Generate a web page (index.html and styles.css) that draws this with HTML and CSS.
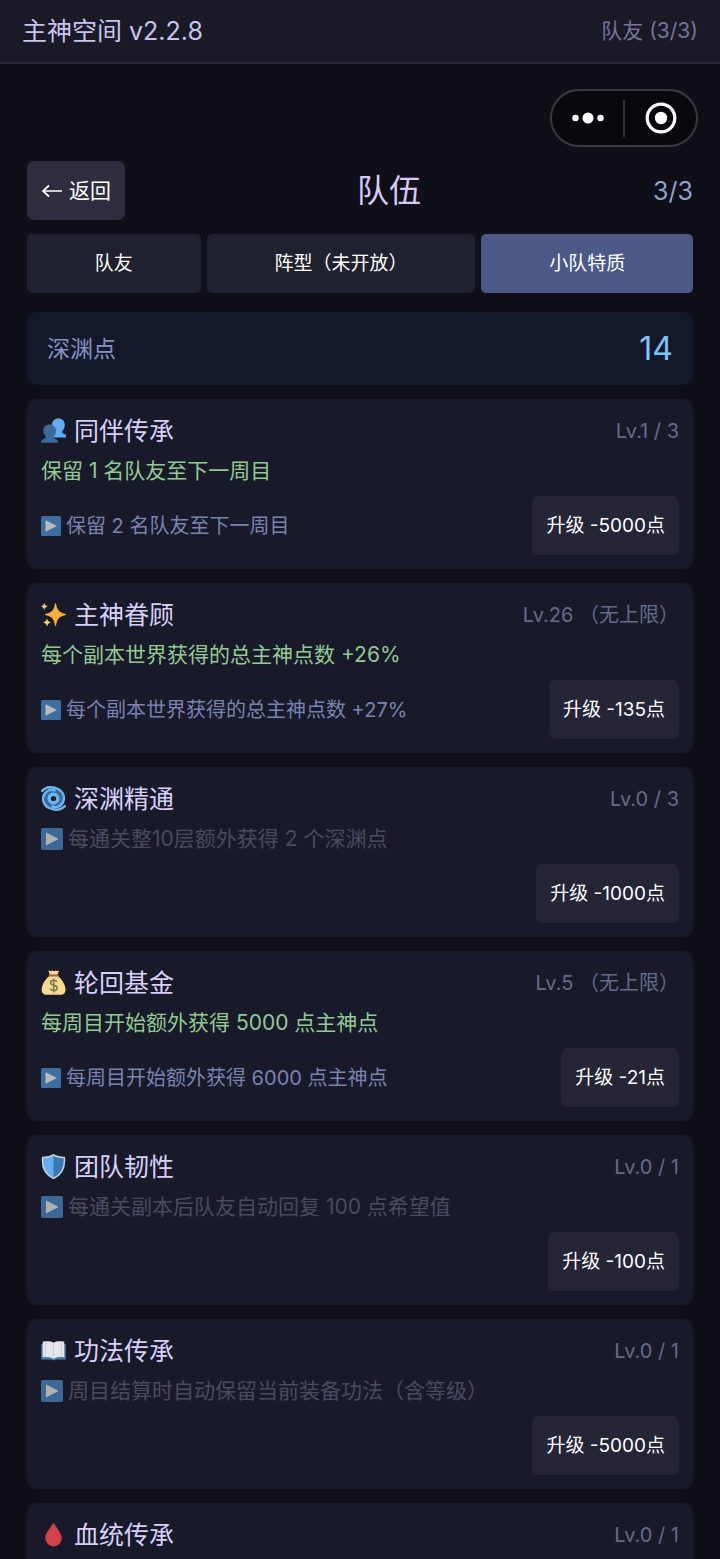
FILE: index.html
```html
<!DOCTYPE html>
<html lang="zh-CN">
<head>
    <meta charset="UTF-8">
    <meta name="viewport" content="width=device-width, initial-scale=1.0">
    <title>主神空间</title>
    <link rel="stylesheet" href="styles.css">
</head>
<body>
    <!-- Icônes partagées -->
    <svg class="sprite" aria-hidden="true">
        <symbol id="play" viewBox="0 0 20 20">
            <rect width="20" height="20" rx="1.5" fill="#4b8ac4"/>
            <path d="M4.5 4.2 16 10 4.5 15.8z" fill="#f3f1ee"/>
        </symbol>
    </svg>

    <header class="navbar">
        <span class="app-name">主神空间 v2.2.8</span>
        <span class="page-name">队友 (3/3)</span>
    </header>

    <div class="capsule-row">
        <div class="capsule">
            <button type="button" aria-label="更多">
                <svg width="32" height="12" viewBox="0 0 32 12" fill="#fff"><circle cx="3.5" cy="6" r="3.2"/><circle cx="16" cy="6" r="5.5"/><circle cx="28.5" cy="6" r="3.2"/></svg>
            </button>
            <span class="capsule-line"></span>
            <button type="button" aria-label="关闭">
                <svg width="32" height="32" viewBox="0 0 32 32"><circle cx="16" cy="16" r="13.8" fill="none" stroke="#fff" stroke-width="3.2"/><circle cx="16" cy="16" r="6.2" fill="#fff"/></svg>
            </button>
        </div>
    </div>

    <main class="container">
        <div class="title-row">
            <button type="button" class="btn btn-back"><svg width="22" height="14" viewBox="0 0 22 14" fill="none" stroke="#fff" stroke-width="1.7"><path d="M21 7H2M8 1.5 2 7l6 5.5"/></svg>返回</button>
            <h1>队伍</h1>
            <span class="count">3/3</span>
        </div>

        <nav class="tabs">
            <button type="button" class="tab">队友</button>
            <button type="button" class="tab">阵型（未开放）</button>
            <button type="button" class="tab active">小队特质</button>
        </nav>

        <div class="points">
            <span>深渊点</span>
            <strong>14</strong>
        </div>

        <!-- Liste des traits -->
        <section class="card">
            <div class="card-head">
                <svg class="emoji" viewBox="0 0 25 25">
                    <path d="M17.5.5c3.800 0 6.300 2.500 6.300 6.200 0 2.600-.8 4.800-2.500 6.300v2l3.200 1.600c.4.300.5 1.300.5 3H10v-4l3.500-2c-1.700-1.600-2.500-3.900-2.500-6.700C11 3 13.500.5 17.500.5z" fill="#64adf0"/>
                    <path d="M8.700 6.500c3.800 0 6.300 2.500 6.300 6.200 0 2.600-.8 4.300-2.300 5.600v2l3.500 1.700c.5.400.6 1.400.6 2.700H0c0-1.600.2-2.400.8-2.800L4.500 20v-1.900c-1.500-1.500-2.200-3.300-2.200-5.800 0-3.400 2.600-5.800 6.400-5.800z" fill="#3b6a9c"/>
                </svg>
                <h2>同伴传承</h2>
                <span class="level">Lv.1 / 3</span>
            </div>
            <p class="current">保留 1 名队友至下一周目</p>
            <div class="card-foot">
                <p class="next"><svg><use href="#play"/></svg>保留 2 名队友至下一周目</p>
                <button type="button" class="btn">升级 -5000点</button>
            </div>
        </section>

        <section class="card">
            <div class="card-head">
                <svg class="emoji" viewBox="0 0 25 25">
                    <path d="M14.500 1.500c1.200 6.500 3 9.200 10.300 11-7.300 1.800-9.100 4.600-10.300 11.200-1.200-6.600-3-9.400-10.200-11.200 7.200-1.800 9-4.500 10.200-11z" fill="#f7b03c" stroke="#f7b03c"/>
                    <path d="M3.300.8c.5 2.200 1.300 3 3.400 3.600-2.100.6-2.900 1.400-3.400 3.600C2.800 5.800 2 5 0 4.400 2 3.800 2.800 3 3.300.8zM6 16.300c.6 2.600 1.500 3.500 4 4.200-2.500.6-3.400 1.600-4 4.200-.6-2.600-1.500-3.600-4-4.200 2.500-.7 3.400-1.600 4-4.200z" fill="#fad365"/>
                </svg>
                <h2>主神眷顾</h2>
                <span class="level">Lv.26 （无上限）</span>
            </div>
            <p class="current">每个副本世界获得的总主神点数 +26%</p>
            <div class="card-foot">
                <p class="next"><svg><use href="#play"/></svg>每个副本世界获得的总主神点数 +27%</p>
                <button type="button" class="btn">升级 -135点</button>
            </div>
        </section>

        <section class="card">
            <div class="card-head">
                <svg class="emoji" viewBox="0 0 25 25" fill="none" stroke-linecap="round">
                    <circle cx="12.500" cy="12.500" r="9" fill="#396b9c"/>
                    <circle cx="12.500" cy="12.500" r="4.300" fill="#141c30" stroke="#6db5f0" stroke-width="3.400"/>
                    <path d="M1.200 4.800C5.500.500 12 .400 17.500 3.300c5 2.800 6.800 8.700 4 13.700-2.300 4-6.800 5.200-10 3.500" stroke="#6db5f0" stroke-width="2.600"/>
                    <path d="M23.800 20.200C19.500 24.500 13 24.600 7.500 21.700c-5-2.800-6.800-8.700-4-13.700 2.300-4 6.800-5.200 10-3.500" stroke="#6db5f0" stroke-width="2.600"/>
                </svg>
                <h2>深渊精通</h2>
                <span class="level">Lv.0 / 3</span>
            </div>
            <p class="locked"><svg><use href="#play"/></svg>每通关整10层额外获得 2 个深渊点</p>
            <div class="card-foot">
                <button type="button" class="btn">升级 -1000点</button>
            </div>
        </section>

        <section class="card">
            <div class="card-head">
                <svg class="emoji" viewBox="0 0 25 25">
                    <path d="M7.500.3c1.500.9 2.700.9 3.800.1 1.200.8 2.200.8 3.400 0 1 .8 2 .8 3.300.1l-1.700 5.200c4.200 2.500 8.200 9 8.200 13.500 0 4-1.700 5.500-5 5.500H6c-3.500 0-5.300-1.500-5.300-5.200C.7 14.900 4.700 8.200 9 5.700z" fill="#f8d990"/>
                    <path d="M8.500 5.500h8.300" stroke="#a85c46" stroke-width="2" stroke-linecap="round"/>
                    <path d="M16 11.800c-.8-1.200-1.900-1.600-3.300-1.600-1.900 0-3.100 1-3.100 2.500 0 3.500 6.600 1.700 6.600 5.200 0 1.700-1.400 2.700-3.400 2.700-1.600 0-2.900-.6-3.600-1.900M12.700 8.500v14" fill="none" stroke="#777a50" stroke-width="1.500"/>
                </svg>
                <h2>轮回基金</h2>
                <span class="level">Lv.5 （无上限）</span>
            </div>
            <p class="current">每周目开始额外获得 5000 点主神点</p>
            <div class="card-foot">
                <p class="next"><svg><use href="#play"/></svg>每周目开始额外获得 6000 点主神点</p>
                <button type="button" class="btn">升级 -21点</button>
            </div>
        </section>

        <section class="card">
            <div class="card-head">
                <svg class="emoji" viewBox="0 0 25 25">
                    <path d="M12.500.8c2.900 2 6.500 2.700 10.800 2.600 1 9.700-1.400 16.800-10.800 21-9.400-4.200-11.800-11.300-10.800-21C6 3.500 9.600 2.800 12.500.8z" fill="#3b79b5"/>
                    <path d="M12.500.8v23.600C3.100 20.200.7 13.100 1.700 3.400 6 3.500 9.600 2.800 12.500.8z" fill="#65aff0"/>
                    <path d="M12.500.8c2.900 2 6.500 2.700 10.800 2.600 1 9.700-1.400 16.800-10.800 21-9.400-4.200-11.800-11.300-10.800-21C6 3.500 9.600 2.800 12.500.8z" fill="none" stroke="#c9d3dc" stroke-width="1.500"/>
                </svg>
                <h2>团队韧性</h2>
                <span class="level">Lv.0 / 1</span>
            </div>
            <p class="locked"><svg><use href="#play"/></svg>每通关副本后队友自动回复 100 点希望值</p>
            <div class="card-foot">
                <button type="button" class="btn">升级 -100点</button>
            </div>
        </section>

        <section class="card">
            <div class="card-head">
                <svg class="emoji" viewBox="0 0 25 25">
                    <path d="M.3 6h24.400v15.500H15c-.8 1-4.200 1-5 0H.3z" fill="#4b7ba7"/>
                    <path d="M1.700 3.800c4-.8 8.300-.5 10.800 1 2.500-1.500 6.800-1.800 10.800-1v15.500c-4-.4-8.300-.2-10.800 1.500-2.500-1.700-6.800-1.900-10.800-1.500z" fill="#e5e7eb"/>
                    <path d="M12.500 4.800v16M4.500 4v15M20.500 4v15" stroke="#c3c7ce" stroke-width=".8"/>
                </svg>
                <h2>功法传承</h2>
                <span class="level">Lv.0 / 1</span>
            </div>
            <p class="locked"><svg><use href="#play"/></svg>周目结算时自动保留当前装备功法（含等级）</p>
            <div class="card-foot">
                <button type="button" class="btn">升级 -5000点</button>
            </div>
        </section>

        <section class="card">
            <div class="card-head">
                <svg class="emoji" viewBox="0 0 25 25">
                    <path d="M12.500.8c3.500 5.400 8.200 10.600 8.200 15.500a8.200 8.200 0 0 1-16.400 0C4.300 11.400 9 6.200 12.500.8z" fill="#d3414c"/>
                </svg>
                <h2>血统传承</h2>
                <span class="level">Lv.0 / 1</span>
            </div>
        </section>
    </main>
</body>
</html>
```
FILE: styles.css
```css
* {
    box-sizing: border-box;
}
body {
    margin: 0;
    height: 100vh;
    display: flex;
    flex-direction: column;
    overflow: hidden;
    background-color: #0f1017;
    color: #fff;
    font-family: Inter, "Noto Sans CJK SC", sans-serif;
    font-size: 20px;
    line-height: 30px;
}
h1, h2, p {
    margin: 0;
    font-weight: 400;
}
button {
    border: none;
    background: none;
    color: inherit;
    font: inherit;
    padding: 0;
}
svg {
    flex: none;
}
.sprite {
    display: none;
}
.navbar {
    flex: none;
    height: 64px;
    padding: 0 22px;
    display: flex;
    align-items: center;
    justify-content: space-between;
    background-color: #1a1a26;
    border-bottom: 2px solid #29283a;
}
.app-name {
    font-size: 25px;
    color: #c9c3f0;
}
.page-name {
    font-size: 21px;
    color: #77739c;
}

/* Capsule */
.capsule-row {
    flex: none;
    display: flex;
    justify-content: flex-end;
    padding: 25px 22px 14px;
}
.capsule {
    display: flex;
    align-items: center;
    width: 148px;
    height: 58px;
    border: 2px solid #39393d;
    border-radius: 30px;
    background-color: #09090d;
}
.capsule button {
    flex: 1;
    display: flex;
    justify-content: center;
}
.capsule-line {
    width: 2px;
    height: 37px;
    background-color: #323237;
}

.container {
    flex: 1;
    min-height: 0;
    overflow: hidden;
    padding: 0 27px;
}
.title-row {
    display: flex;
    align-items: center;
    justify-content: space-between;
    margin-bottom: 14px;
}
.title-row h1 {
    font-size: 32px;
    line-height: 40px;
    color: #d9c8fa;
}
.count {
    font-size: 25px;
    color: #93a0cc;
}
.btn {
    height: 59px;
    padding: 0 14px;
    border-radius: 7px;
    background-color: #252536;
    font-size: 19px;
    white-space: nowrap;
}
.btn-back {
    display: flex;
    align-items: center;
    gap: 6px;
    background-color: #2e2c3d;
    font-size: 21px;
}
.tabs {
    display: flex;
    gap: 6px;
    margin-bottom: 19px;
}
.tab {
    flex: 1 1 auto;
    height: 59px;
    border-radius: 5px;
    background-color: #20212e;
    font-size: 19px;
}
.tab.active {
    background-color: #4c5987;
}
.points {
    display: flex;
    align-items: center;
    justify-content: space-between;
    height: 73px;
    padding: 0 20px;
    border-radius: 10px;
    background-color: #13182b;
    font-size: 23px;
    color: #8691bf;
}
.points strong {
    font-size: 32px;
    font-weight: 400;
    color: #7fc4f8;
}

/* Cartes */
.card {
    min-height: 170px;
    margin-top: 14px;
    padding: 14px;
    border-radius: 10px;
    background-color: #181a2a;
}
.card-head {
    display: flex;
    align-items: center;
    height: 35px;
    margin-bottom: 8px;
}
.emoji {
    width: 25px;
    height: 25px;
    margin-right: 8px;
}
.card-head h2 {
    font-size: 25px;
    color: #d8d0fa;
}
.level {
    margin-left: auto;
    font-size: 20px;
    color: #666a8a;
}
.current, .locked {
    font-size: 21px;
    margin-bottom: 10px;
}
.current {
    color: #93ca93;
}
.next, .locked {
    display: flex;
    align-items: center;
    gap: 5px;
}
.next {
    color: #7a84b0;
}
.next svg {
    width: 20px;
    height: 20px;
    opacity: 0.75;
}
.locked {
    color: #4a4b60;
}
.locked svg {
    width: 22px;
    height: 22px;
    opacity: 0.7;
}
.card-foot {
    display: flex;
    align-items: center;
}
.card-foot .btn {
    margin-left: auto;
}
```
